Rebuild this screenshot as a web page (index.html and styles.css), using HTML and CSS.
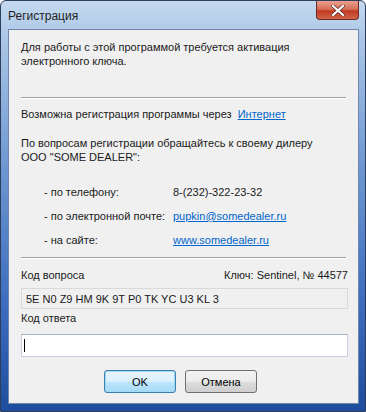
FILE: index.html
```html
<!DOCTYPE html>
<html lang="ru">
<head>
    <meta charset="UTF-8">
    <title>Регистрация</title>
    <link rel="stylesheet" href="styles.css">
</head>
<body>
<div class="window">
    <div class="titlebar">
        <span class="title">Регистрация</span>
        <div class="close-btn">
            <svg width="14" height="11" viewBox="0 0 14 11">
                <path d="M2 1 L12 10 M12 1 L2 10" stroke="#5a2a22" stroke-width="3.6" stroke-linecap="square"/>
                <path d="M2 1 L12 10 M12 1 L2 10" stroke="#ffffff" stroke-width="2.2" stroke-linecap="square"/>
            </svg>
        </div>
    </div>
    <div class="client">
        <p class="intro">Для работы с этой программой требуется активация<br>электронного ключа.</p>
        <div class="separator first"></div>
        <p class="via">Возможна регистрация программы через &nbsp;<a href="#">Интернет</a></p>
        <p class="dealer">По вопросам регистрации обращайтесь к своему дилеру<br>ООО "SOME DEALER":</p>
        <div class="contacts">
            <div class="contact-row">
                <span class="contact-label">- по телефону:</span>
                <span class="contact-value">8-(232)-322-23-32</span>
            </div>
            <div class="contact-row">
                <span class="contact-label">- по электронной почте:</span>
                <a class="contact-value link" href="#">pupkin@somedealer.ru</a>
            </div>
            <div class="contact-row">
                <span class="contact-label">- на сайте:</span>
                <a class="contact-value link" href="#">www.somedealer.ru</a>
            </div>
        </div>
        <div class="separator second"></div>
        <div class="question-head">
            <span>Код вопроса</span>
            <span>Ключ: Sentinel, № 44577</span>
        </div>
        <div class="question-box">5E N0 Z9 HM 9K 9T P0 TK YC U3 KL 3</div>
        <div class="answer-label">Код ответа</div>
        <div class="answer-box"><span class="caret"></span></div>
        <div class="buttons">
            <button class="btn btn-default">OK</button>
            <button class="btn">Отмена</button>
        </div>
    </div>
</div>
</body>
</html>
```

FILE: styles.css
```css
body {
    margin: 0;
    font-family: "Liberation Sans", Arial, sans-serif;
    font-size: 11px;
    color: #1a1a1a;
    background: #fff;
}
.window {
    width: 366px;
    height: 412px;
    box-sizing: border-box;
    border: 1px solid #2c3e5c;
    border-radius: 6px 6px 0 0;
    background: linear-gradient(to bottom, #c4d9ef 0%, #a9c5e6 10%, #6f98d2 40%, #3a6bbd 75%, #1f4d9e 100%);
    display: flex;
    flex-direction: column;
    overflow: hidden;
}
.titlebar {
    height: 28px;
    display: flex;
    justify-content: space-between;
    align-items: flex-start;
    padding-left: 7px;
}
.title {
    font-family: "Liberation Sans", Arial, sans-serif;
    font-size: 12px;
    line-height: 14px;
    margin-top: 8px;
    color: #1e1e1e;
}
.close-btn {
    width: 43px;
    height: 19px;
    margin-right: 6px;
    box-sizing: border-box;
    border: 1px solid #6b2a22;
    border-top: none;
    border-radius: 0 0 4px 4px;
    background: linear-gradient(to bottom, #e9a08e 0%, #d7705a 45%, #c23a22 55%, #d0644a 100%);
    display: flex;
    justify-content: center;
    align-items: center;
}
.client {
    flex: 1;
    margin: 0 6px 7px 7px;
    background: #f0f0f0;
    border: 1px solid #6e87aa;
    padding: 10px 10px 0 12px;
}
p {
    margin: 0;
    line-height: 14px;
}
.separator {
    height: 0;
    border-top: 1px solid #a0a0a0;
    border-bottom: 1px solid #ffffff;
    margin-right: 2px;
}
.separator.first {
    margin-top: 29px;
}
.via {
    margin-top: 8px;
}
.via a,
.link {
    color: #0066cc;
}
.dealer {
    margin-top: 15px;
}
.contacts {
    margin-top: 21px;
    padding-left: 23px;
}
.contact-row {
    display: flex;
    line-height: 14px;
    margin-bottom: 10px;
}
.contact-label {
    width: 129px;
}
.question-head {
    display: flex;
    justify-content: space-between;
    line-height: 14px;
    margin-top: 9px;
}
.question-box {
    margin-top: 6px;
    height: 21px;
    box-sizing: border-box;
    border: 1px solid #d9d9d9;
    padding: 3px 4px;
    line-height: 14px;
}
.answer-label {
    margin-top: 2px;
    line-height: 14px;
}
.answer-box {
    margin-top: 9px;
    height: 23px;
    box-sizing: border-box;
    background: #fff;
    border: 1px solid #c7d2de;
    border-top-color: #a4b3c4;
    display: flex;
    align-items: center;
    padding-left: 2px;
}
.caret {
    width: 1px;
    height: 13px;
    background: #000;
}
.buttons {
    display: flex;
    justify-content: center;
    gap: 9px;
    margin-top: 13px;
    padding-right: 8px;
}
.btn {
    width: 72px;
    height: 23px;
    font-family: "Liberation Sans", Arial, sans-serif;
    font-size: 11px;
    color: #000;
    border: 1px solid #707070;
    border-radius: 3px;
    background: linear-gradient(to bottom, #f2f2f2 0%, #ebebeb 50%, #dddddd 51%, #cfcfcf 100%);
    padding: 0;
}
.btn-default {
    border-color: #3c7fb1;
    box-shadow: inset 0 0 0 1px #9fd8f5;
    background: linear-gradient(to bottom, #eaf6fd 0%, #d9f0fc 50%, #bee6fd 51%, #a7d9f5 100%);
}
```
